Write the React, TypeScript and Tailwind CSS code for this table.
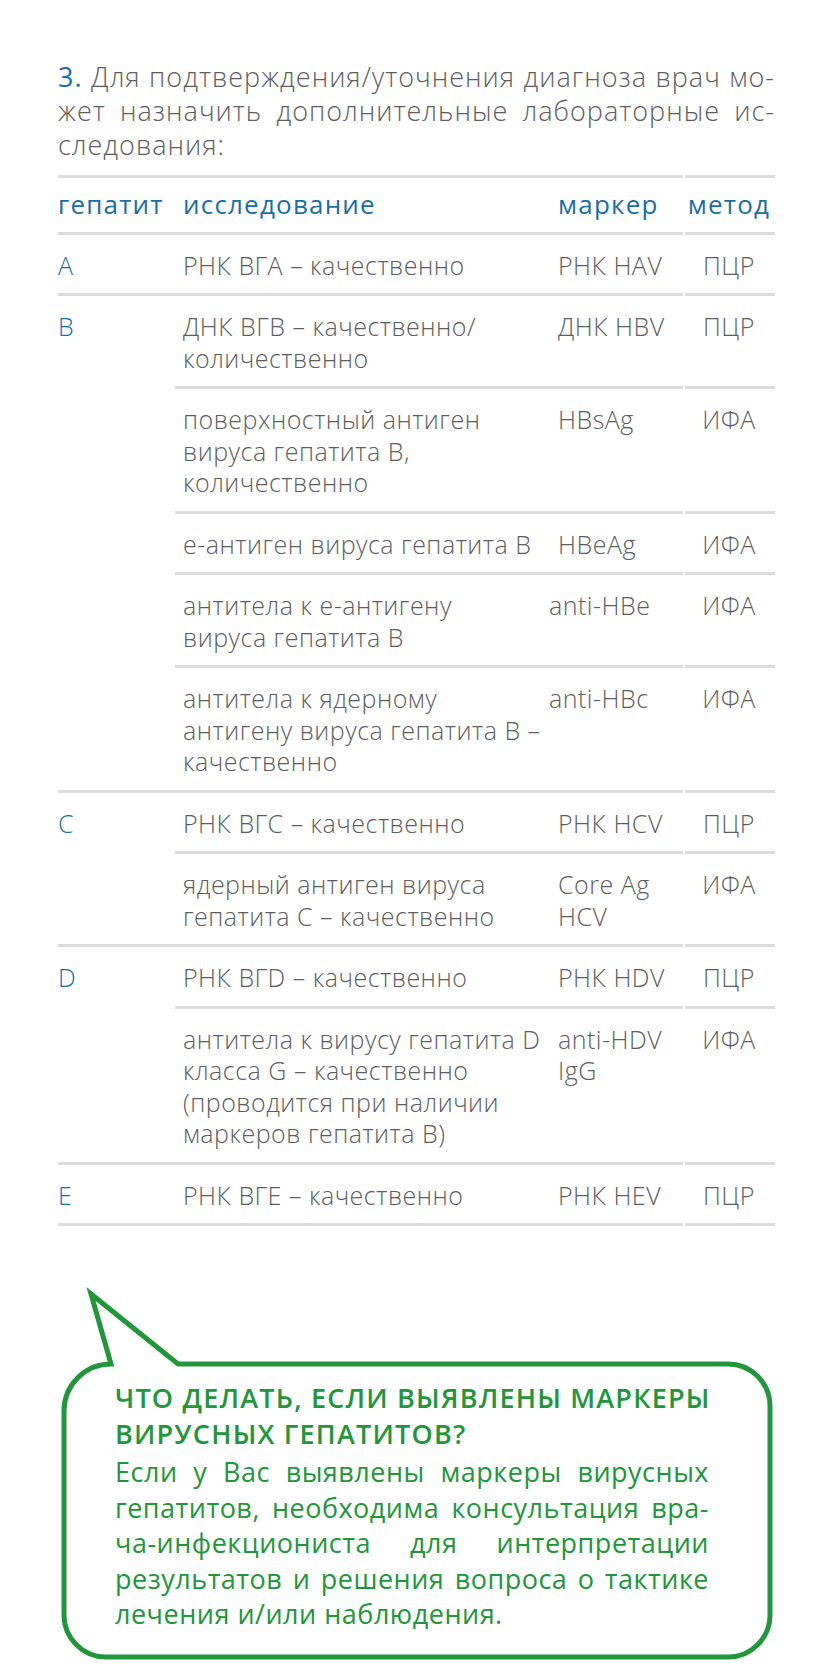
import React from "react";

type Sub = { test: string[]; marker: string[]; method: string; shift?: boolean };
type Group = { letter: string; rows: Sub[] };

const groups: Group[] = [
  { letter: "A", rows: [{ test: ["РНК ВГА – качественно"], marker: ["РНК HAV"], method: "ПЦР" }] },
  {
    letter: "B",
    rows: [
      { test: ["ДНК ВГВ – качественно/", "количественно"], marker: ["ДНК HBV"], method: "ПЦР" },
      { test: ["поверхностный антиген", "вируса гепатита В,", "количественно"], marker: ["HBsAg"], method: "ИФА" },
      { test: ["е-антиген вируса гепатита В"], marker: ["HBeAg"], method: "ИФА" },
      { test: ["антитела к е-антигену", "вируса гепатита В"], marker: ["anti-HBe"], method: "ИФА", shift: true },
      { test: ["антитела к ядерному", "антигену вируса гепатита В –", "качественно"], marker: ["anti-HBc"], method: "ИФА", shift: true },
    ],
  },
  {
    letter: "C",
    rows: [
      { test: ["РНК ВГС – качественно"], marker: ["РНК HCV"], method: "ПЦР" },
      { test: ["ядерный антиген вируса", "гепатита С – качественно"], marker: ["Core Ag", "HCV"], method: "ИФА" },
    ],
  },
  {
    letter: "D",
    rows: [
      { test: ["РНК ВГD – качественно"], marker: ["РНК HDV"], method: "ПЦР" },
      {
        test: ["антитела к вирусу гепатита D", "класса G – качественно", "(проводится при наличии", "маркеров гепатита В)"],
        marker: ["anti-HDV", "IgG"],
        method: "ИФА",
      },
    ],
  },
  { letter: "E", rows: [{ test: ["РНК ВГЕ – качественно"], marker: ["РНК HEV"], method: "ПЦР" }] },
];

const Rule = () => (
  <div className="flex gap-[2px]">
    <div className="h-[3px] flex-1 bg-[#dcdcdc]" />
    <div className="h-[3px] w-[90px] bg-[#dcdcdc]" />
  </div>
);

const Lines = ({ lines }: { lines: string[] }) => (
  <>
    {lines.map((l) => (
      <div key={l} className="whitespace-nowrap">{l}</div>
    ))}
  </>
);

const JLine = ({ children, last = false }: { children: React.ReactNode; last?: boolean }) => (
  <div className={last ? "whitespace-nowrap" : "text-justify [text-align-last:justify]"}>{children}</div>
);

export default function App() {
  return (
    <div className="w-[836px] h-[1670px] bg-white overflow-hidden" style={{ fontFamily: "'Open Sans', 'Noto Sans', sans-serif" }}>
      <div className="pl-[58px] w-[775px] pt-[60px]">
        <div className="text-[27px] leading-[34px] font-light tracking-[1px] text-[#5d5d5d]">
          <JLine>
            <span className="text-[#1b6ea5] font-normal">3.</span>{" Для подтверждения/уточнения диагноза врач мо-"}
          </JLine>
          <JLine>жет назначить дополнительные лабораторные ис-</JLine>
          <JLine last>следования:</JLine>
        </div>

        <div className="mt-[13px] text-[25px] leading-[31.5px] font-light tracking-[0.5px]">
          <Rule />
          <div className="flex pt-[11px] pb-[11px] text-[26px] tracking-[1.2px] text-[#1b6ea5] font-normal">
            <div className="w-[117px] whitespace-nowrap">гепатит</div>
            <div className="w-[375px] pl-[8px]">исследование</div>
            <div className="w-[133px] pl-[8px]">маркер</div>
            <div className="w-[92px] text-center">метод</div>
          </div>
          <Rule />
          {groups.map((g) => (
            <div key={g.letter}>
              <div className="flex">
                <div className="w-[117px] pt-[15px] text-[#1b6ea5]">{g.letter}</div>
                <div className="flex-1 text-[#5d5d5d]">
                  {g.rows.map((r, i) => (
                    <div key={i}>
                      {i > 0 && <Rule />}
                      <div className="flex pt-[15px] pb-[12px]">
                        <div className="w-[375px] pl-[8px]">
                          <Lines lines={r.test} />
                        </div>
                        <div className={`w-[133px] pl-[8px] ${r.shift ? "-ml-[9px] mr-[9px]" : ""}`}>
                          <Lines lines={r.marker} />
                        </div>
                        <div className="w-[92px] text-center">{r.method}</div>
                      </div>
                    </div>
                  ))}
                </div>
              </div>
              <Rule />
            </div>
          ))}
        </div>
      </div>

      <div className="relative mt-[56px] h-[390px]">
        <svg className="absolute inset-0" width="836" height="390" viewBox="0 0 836 390" fill="none">
          <path
            d="M 178 82 L 728 82 A 42 42 0 0 1 770 124 L 770 333 A 42 42 0 0 1 728 375 L 106 375 A 42 42 0 0 1 64 333 L 64 129 A 47 47 0 0 1 111 82 L 91 12 Z"
            stroke="#21963a"
            strokeWidth="5"
            strokeLinejoin="miter"
            fill="white"
          />
        </svg>
        <div className="relative pt-[98px] pl-[115px] w-[709px] text-[#21963a]">
          <div className="text-[27px] leading-[36px] font-semibold uppercase tracking-[1.2px] whitespace-nowrap">
            <div>Что делать, если выявлены маркеры</div>
            <div>вирусных гепатитов?</div>
          </div>
          <div className="mt-[2px] text-[27px] leading-[35.5px] font-medium tracking-[0.5px]">
            <JLine>Если у Вас выявлены маркеры вирусных</JLine>
            <JLine>гепатитов, необходима консультация вра-</JLine>
            <JLine>ча-инфекциониста для интерпретации</JLine>
            <JLine>результатов и решения вопроса о тактике</JLine>
            <JLine last>лечения и/или наблюдения.</JLine>
          </div>
        </div>
      </div>
    </div>
  );
}
